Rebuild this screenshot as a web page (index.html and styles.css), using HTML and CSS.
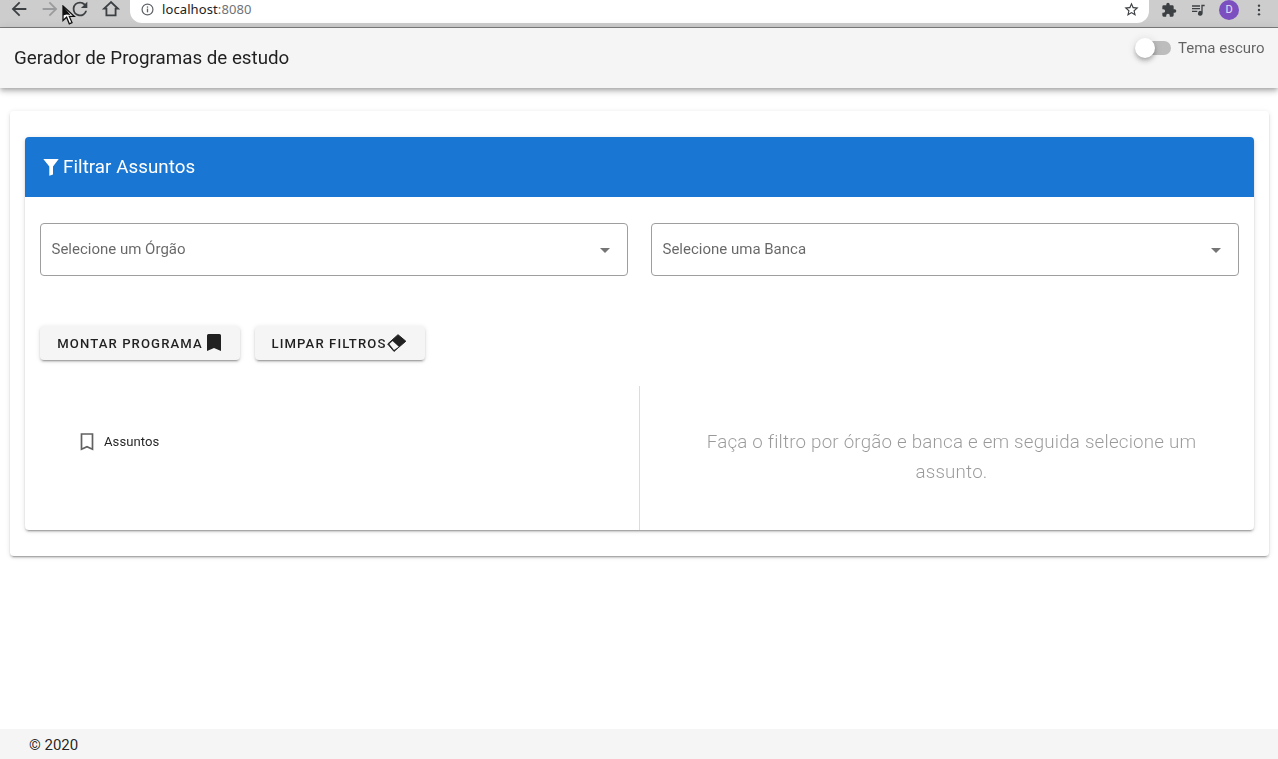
FILE: index.html
```html
<!DOCTYPE html>
<html lang="pt">
<head>
<meta charset="utf-8">
<title>Gerador de Programas de estudo</title>
<link rel="stylesheet" href="styles.css">
</head>
<body>
<div class="browser">
  <div class="nav">
    <svg class="b-icon" viewBox="0 0 24 24"><path fill="#3c4043" d="M20 11H7.83l5.59-5.59L12 4l-8 8 8 8 1.41-1.41L7.83 13H20z"/></svg>
    <svg class="b-icon" viewBox="0 0 24 24"><path fill="#9a9b9c" d="M4 11h12.17l-5.59-5.59L12 4l8 8-8 8-1.41-1.41L16.17 13H4z"/></svg>
    <svg class="b-icon" viewBox="0 0 24 24"><path fill="#3c4043" d="M17.65 6.35A7.96 7.96 0 0 0 12 4a8 8 0 1 0 7.73 10h-2.08A6 6 0 1 1 12 6c1.66 0 3.14.69 4.22 1.78L13 11h7V4z"/></svg>
    <svg class="b-icon" viewBox="0 0 24 24"><path fill="none" stroke="#3c4043" stroke-width="2" d="M12 4.5 4.5 11.5H7V19h10v-7.500h2.500z"/></svg>
  </div>
  <div class="omnibox">
    <svg class="info" viewBox="0 0 16 16"><circle cx="8" cy="8" r="5.800" fill="none" stroke="#5f6368" stroke-width="1.300"/><rect x="7.300" y="7" width="1.400" height="4" fill="#5f6368"/><rect x="7.300" y="4.700" width="1.400" height="1.400" fill="#5f6368"/></svg>
    <span class="url">localhost<span class="port">:8080</span></span>
    <svg class="star" viewBox="0 0 24 24"><path fill="#3c4043" d="M22 9.240l-7.190-.62L12 2 9.190 8.630 2 9.240l5.460 4.730L5.820 21 12 17.270 18.180 21l-1.630-7.030L22 9.240zM12 15.400l-3.760 2.270 1-4.280-3.320-2.880 4.380-.38L12 6.100l1.710 4.040 4.380.38-3.320 2.880 1 4.280L12 15.400z"/></svg>
  </div>
  <div class="tools">
    <svg class="t-icon" viewBox="0 0 24 24"><path fill="#3c4043" d="M20.500 11H19V7a2 2 0 0 0-2-2h-4V3.500a2.500 2.500 0 0 0-5 0V5H4a2 2 0 0 0-2 2v3.800h1.500a2.700 2.700 0 0 1 0 5.400H2V20a2 2 0 0 0 2 2h3.800v-1.500a2.700 2.700 0 0 1 5.400 0V22H17a2 2 0 0 0 2-2v-4h1.500a2.500 2.500 0 0 0 0-5z"/></svg>
    <svg class="t-icon" viewBox="0 0 24 24"><path fill="#3c4043" d="M3 5h12v2H3zM3 9h12v2H3zM3 13h8v2H3zM17 4h5v2.500h-3V17a3.500 3.500 0 1 1-2-3.150z"/></svg>
    <span class="avatar">D</span>
    <svg class="t-icon" viewBox="0 0 24 24"><circle cx="12" cy="5.500" r="1.800" fill="#3c4043"/><circle cx="12" cy="12" r="1.800" fill="#3c4043"/><circle cx="12" cy="18.500" r="1.800" fill="#3c4043"/></svg>
  </div>
</div>
<svg class="cursor" viewBox="0 0 14 21"><path fill="#fff" stroke="#111" stroke-width="1.300" d="M1 1v14.500l3.600-3.300 2.700 6.600 2.700-1.200-2.700-6.200H12.500z"/><path fill="#111" d="M1 1v9.500l3.500-1 4 .5z"/></svg>

<header class="appbar">
  <div class="app-title">Gerador de Programas de estudo</div>
  <div class="theme">
    <span class="switch"><span class="track"></span><span class="thumb"></span></span>
    <span class="theme-label">Tema escuro</span>
  </div>
</header>

<main class="page">
  <section class="outer">
    <section class="inner">
      <h2 class="head">
        <svg class="funnel" viewBox="0 0 16 18"><path fill="#fff" d="M.300 1h15.400L10 8.600V16.500L6.300 17.800V8.600z"/></svg>
        <span>Filtrar Assuntos</span>
      </h2>
      <div class="selects">
        <div class="select"><span>Selecione um Órgão</span><i class="caret"></i></div>
        <div class="select"><span>Selecione uma Banca</span><i class="caret"></i></div>
      </div>
      <div class="actions">
        <button class="btn btn-a"><span>MONTAR PROGRAMA</span>
          <svg class="bookmark" viewBox="0 0 14 17"><path fill="#212121" d="M1.500 0h11A1.500 1.500 0 0 1 14 1.500V17l-7-3-7 3V1.500A1.500 1.500 0 0 1 1.500 0z"/></svg>
        </button>
        <button class="btn btn-b"><span>LIMPAR FILTROS</span>
          <svg class="eraser" viewBox="0 0 20 18"><path fill="#212121" stroke="#212121" stroke-width="1" stroke-linejoin="round" d="M11 .7 18.800 7.200 7 17.400.7 10z"/><path fill="#f5f5f5" d="M5.500 6.900 11.800 12.800 7 15.900 2.300 10z"/></svg>
        </button>
      </div>
      <div class="split">
        <div class="tree">
          <svg class="bm-outline" viewBox="0 0 14 18"><path fill="none" stroke="#616161" stroke-width="1.700" d="M1.500 1h11v15.300L7 13.800l-5.500 2.500z"/></svg>
          <span class="tree-label">Assuntos</span>
        </div>
        <div class="hint">Faça o filtro por órgão e banca e em seguida selecione um assunto.</div>
      </div>
    </section>
  </section>
</main>

<footer class="foot">© 2020</footer>
</body>
</html>
```

FILE: styles.css
```css
* { box-sizing: border-box; }
html, body { margin: 0; height: 100%; }
body {
  width: 1278px;
  height: 759px;
  overflow: hidden;
  position: relative;
  display: flex;
  flex-direction: column;
  font-family: Roboto, sans-serif;
  background: #fff;
  color: rgba(0, 0, 0, .87);
}

/* browser chrome */
.browser {
  height: 28px;
  flex: none;
  display: flex;
  align-items: flex-start;
  background: #cdcdcd;
  border-bottom: 1px solid #7d7d7d;
}
.nav { display: flex; width: 130px; padding-left: 8px; gap: 8.500px; height: 18px; }
.b-icon { width: 22px; height: 22px; flex: none; margin-top: -2px; }
.omnibox {
  width: 1019px;
  height: 23px;
  background: #fff;
  border-radius: 0 0 12px 12px;
  display: flex;
  align-items: center;
  padding: 0 9px 5px 10px;
}
.info { width: 15px; height: 15px; flex: none; }
.url { margin-left: 7px; font: 13px "Noto Sans", sans-serif; color: #202124; flex: 1; letter-spacing: .1px; }
.port { color: #6f7276; }
.star { width: 17px; height: 17px; }
.tools { flex: 1; display: flex; align-items: center; height: 18px; padding: 1px 0 0 12px; gap: 7px; }
.t-icon { width: 16px; height: 16px; flex: none; }
.tools .t-icon:nth-child(2) { margin-left: 6px; }
.avatar {
  width: 20px;
  height: 20px;
  flex: none;
  margin-left: 6px;
  margin-right: 5px;
  border-radius: 50%;
  background: #7c4fc0;
  color: #e8e0f5;
  font: 11px/20px Roboto, sans-serif;
  text-align: center;
}
.cursor { position: absolute; left: 62px; top: 5px; width: 14px; height: 21px; }

/* app bar */
.appbar {
  height: 60px;
  flex: none;
  position: relative;
  background: #f5f5f5;
  display: flex;
  justify-content: space-between;
  padding: 0 13px 0 14px;
  box-shadow: 0 2px 4px -1px rgba(0,0,0,.2), 0 4px 5px 0 rgba(0,0,0,.14), 0 1px 10px 0 rgba(0,0,0,.12);
}
.app-title { font-size: 18.750px; line-height: 60px; will-change: transform; }
.theme { display: flex; align-items: flex-start; padding-top: 10px; gap: 7px; will-change: transform; }
.switch { position: relative; width: 36px; height: 20px; display: block; }
.track { position: absolute; left: 2px; top: 3px; width: 34px; height: 14px; border-radius: 7px; background: #bdbdbd; }
.thumb {
  position: absolute;
  left: 0;
  top: 0;
  width: 20px;
  height: 20px;
  border-radius: 50%;
  background: #fff;
  box-shadow: 0 2px 4px -1px rgba(0,0,0,.2), 0 4px 5px 0 rgba(0,0,0,.14), 0 1px 10px 0 rgba(0,0,0,.12);
}
.theme-label { font-size: 15px; line-height: 20px; color: rgba(0,0,0,.6); }

/* main */
.page { flex: 1; padding: 23px 9px 0 10px; will-change: transform; }
.outer {
  height: 445px;
  padding: 26px 15px 0;
  background: #fff;
  border-radius: 4px;
  box-shadow: 0 3px 1px -2px rgba(0,0,0,.2), 0 2px 2px 0 rgba(0,0,0,.14), 0 1px 5px 0 rgba(0,0,0,.12);
}
.inner {
  height: 393px;
  background: #fff;
  border-radius: 4px;
  box-shadow: 0 3px 1px -2px rgba(0,0,0,.2), 0 2px 2px 0 rgba(0,0,0,.14), 0 1px 5px 0 rgba(0,0,0,.12);
}
.head {
  margin: 0;
  height: 60px;
  background: #1976d2;
  color: #fff;
  border-radius: 4px 4px 0 0;
  padding: 0 0 1px 18px;
  display: flex;
  align-items: center;
  gap: 4px;
  font-size: 18.750px;
  font-weight: 400;
  letter-spacing: .05px;
}
.funnel { width: 16px; height: 18px; flex: none; }

.selects { display: flex; gap: 23px; padding: 26px 15px 0; }
.select {
  flex: 1;
  height: 53px;
  border: 1px solid #9e9e9e;
  border-radius: 4px;
  display: flex;
  align-items: center;
  justify-content: space-between;
  padding: 0 17px 2px 10.500px;
  font-size: 15px;
  color: rgba(0,0,0,.6);
}
.caret {
  width: 0;
  height: 0;
  border-left: 5px solid transparent;
  border-right: 5px solid transparent;
  border-top: 5px solid #757575;
  margin-top: 4px;
}

.actions { display: flex; gap: 15px; padding: 50px 15px 0; }
.btn {
  height: 34px;
  padding: 0;
  display: flex;
  align-items: center;
  justify-content: center;
  border: 0;
  border-radius: 4px;
  background: #f5f5f5;
  color: rgba(0,0,0,.87);
  font: 500 13.125px Roboto, sans-serif;
  letter-spacing: 1.100px;
  box-shadow: 0 3px 1px -2px rgba(0,0,0,.2), 0 2px 2px 0 rgba(0,0,0,.14), 0 1px 5px 0 rgba(0,0,0,.12);
}
.btn span { margin-top: 1px; }
.btn-a { width: 200px; gap: 4px; padding-right: 2px; }
.btn-b { width: 170px; gap: 1px; padding-right: 1px; }
.bookmark { width: 14px; height: 17px; margin-top: -2px; }
.eraser { width: 20px; height: 18px; margin-top: -1px; }

.split { display: flex; height: 144px; margin-top: 26px; }
.tree {
  width: 615px;
  border-right: 1px solid #dcdcdc;
  display: flex;
  align-items: flex-start;
  padding: 47px 0 0 55px;
  gap: 10px;
}
.bm-outline { width: 14px; height: 18px; flex: none; }
.tree-label { font-size: 13.125px; line-height: 17px; letter-spacing: .05px; }
.hint {
  flex: 1;
  padding: 41px 50px 0 59px;
  text-align: center;
  font-size: 18.750px;
  font-weight: 300;
  line-height: 30px;
  color: rgba(0,0,0,.4);
  letter-spacing: .2px;
}

/* footer */
.foot {
  height: 30px;
  flex: none;
  background: #f5f5f5;
  padding-left: 29px;
  font-size: 15px;
  line-height: 32px;
}
```
